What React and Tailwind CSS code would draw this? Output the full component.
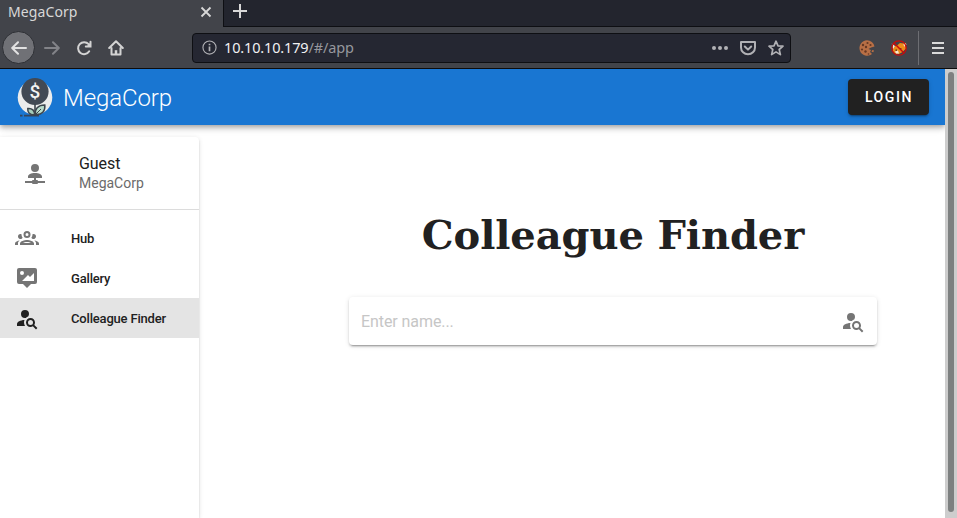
import React from "react";

const ICONS = {
  accountSearch:
    "M15.5,12C18,12 20,14 20,16.5C20,17.38 19.75,18.21 19.31,18.9L22.39,22L21,23.39L17.88,20.32C17.19,20.75 16.37,21 15.5,21C13,21 11,19 11,16.5C11,14 13,12 15.5,12M15.5,14A2.5,2.5 0 0,0 13,16.5A2.5,2.5 0 0,0 15.5,19A2.5,2.5 0 0,0 18,16.5A2.5,2.5 0 0,0 15.5,14M10,4A4,4 0 0,1 14,8C14,8.91 13.69,9.75 13.18,10.43C12.32,10.75 11.55,11.26 10.91,11.9L10,12A4,4 0 0,1 6,8A4,4 0 0,1 10,4M2,20V18C2,15.88 5.31,14.14 9.5,14C9.18,14.78 9,15.62 9,16.5C9,17.79 9.38,19 10,20H2Z",
  accountNetwork:
    "M13,16V18H14A1,1 0 0,1 15,19H22V21H15A1,1 0 0,1 14,22H10A1,1 0 0,1 9,21H2V19H9A1,1 0 0,1 10,18H11V16H5V14.5C5,12.57 8.13,11 12,11C15.87,11 19,12.57 19,14.5V16H13M12,2A4,4 0 0,1 16,6A4,4 0 0,1 12,10A4,4 0 0,1 8,6A4,4 0 0,1 12,2Z",
  tooltipImage:
    "M4,2H20A2,2 0 0,1 22,4V16A2,2 0 0,1 20,18H16L12,22L8,18H4A2,2 0 0,1 2,16V4A2,2 0 0,1 4,2M19,15V7L15,11L13,9L7,15H19M7,5A2,2 0 0,0 5,7A2,2 0 0,0 7,9A2,2 0 0,0 9,7A2,2 0 0,0 7,5Z",
  accountGroup:
    "M12,5A3.5,3.5 0 0,0 8.5,8.5A3.5,3.5 0 0,0 12,12A3.5,3.5 0 0,0 15.5,8.5A3.5,3.5 0 0,0 12,5M12,7A1.5,1.5 0 0,1 13.5,8.5A1.5,1.5 0 0,1 12,10A1.5,1.5 0 0,1 10.5,8.5A1.5,1.5 0 0,1 12,7M5.5,8A2.5,2.5 0 0,0 3,10.5C3,11.44 3.53,12.25 4.29,12.68C4.65,12.88 5.06,13 5.5,13C5.94,13 6.35,12.88 6.71,12.68C7.08,12.47 7.39,12.17 7.62,11.81C6.89,10.86 6.5,9.7 6.5,8.5C6.5,8.41 6.5,8.31 6.5,8.22C6.2,8.08 5.86,8 5.5,8M18.5,8C18.14,8 17.8,8.08 17.5,8.22C17.5,8.31 17.5,8.41 17.5,8.5C17.5,9.7 17.11,10.86 16.38,11.81C16.5,12 16.63,12.15 16.78,12.3C16.94,12.45 17.1,12.58 17.29,12.68C17.65,12.88 18.06,13 18.5,13C18.94,13 19.35,12.88 19.71,12.68C20.47,12.25 21,11.44 21,10.5A2.5,2.5 0 0,0 18.5,8M12,14C9.66,14 5,15.17 5,17.5V19H19V17.5C19,15.17 14.34,14 12,14M4.71,14.55C2.78,14.78 0,15.76 0,17.5V19H3V17.07C3,16.06 3.69,15.22 4.71,14.55M19.29,14.55C20.31,15.22 21,16.06 21,17.07V19H24V17.5C24,15.76 21.22,14.78 19.29,14.55M12,16C13.53,16 15.24,16.5 16.23,17H7.77C8.76,16.5 10.47,16 12,16Z",
};

function Icon({ name, className }) {
  return (
    <svg viewBox="0 0 24 24" className={`size-6 shrink-0 fill-current ${className}`}>
      <path d={ICONS[name]} />
    </svg>
  );
}

// 16px toolbar glyph drawn with strokes
function Glyph({ className = "", children }) {
  return (
    <svg
      viewBox="0 0 16 16"
      className={`size-4 shrink-0 fill-none stroke-current stroke-2 ${className}`}
      strokeLinecap="round"
      strokeLinejoin="round"
    >
      {children}
    </svg>
  );
}

function TabStrip() {
  return (
    <div className="flex h-[27px] bg-[#23252e] text-[#d8d8d8]">
      <div className="flex h-7 w-[223px] items-center justify-between bg-[#42444a] pr-[11px] pb-1 pl-2">
        <span className="text-[14px] leading-5 tracking-[0.1px]">MegaCorp</span>
        <svg viewBox="0 0 12 12" className="size-3 fill-none stroke-current stroke-[1.8]">
          <path d="M1.5 1.5l9 9M10.5 1.5l-9 9" />
        </svg>
      </div>
      <div className="flex flex-1 border-b border-l border-[#0e0f13] pt-[3px] pl-2">
        <svg viewBox="0 0 16 16" className="size-4 fill-none stroke-current stroke-2">
          <path d="M8 1v14M1 8h14" />
        </svg>
      </div>
    </div>
  );
}

function Toolbar() {
  return (
    <div className="flex h-[42px] items-center border-b border-[#0c0c0d] bg-[#42444a] text-[#d3d3d3]">
      <div className="ml-[2px] flex size-[33px] shrink-0 items-center justify-center rounded-full border border-[#2d2f34] bg-[#707176] text-[#e2e2e2]">
        <Glyph>
          <path d="M15 8H1.5M7 2.2L1.2 8L7 13.8" />
        </Glyph>
      </div>
      <Glyph className="ml-[9px] text-[#828388]">
        <path d="M1 8h13.500M9 2.200L14.800 8L9 13.800" />
      </Glyph>
      <Glyph className="ml-4">
        <path d="M13.200 11.300A6 6 0 1 1 12.600 4.200" />
        <path d="M14.500 1.800V6.500H9.800" strokeLinejoin="miter" />
        <path d="M14.500 2.500V6.500H10.500z" className="fill-current stroke-none" />
      </Glyph>
      <Glyph className="ml-4">
        <path d="M1.200 8L8 1.300L14.800 8M3.500 8V14.600H12.500V8" />
        <path d="M8 14V10.200" className="stroke-[2.5]" strokeLinecap="butt" />
      </Glyph>
      <div className="ml-[68px] flex h-[30px] w-[599px] items-center rounded-[4px] border border-[#0e0f13] bg-[#252732] pr-1.5 pl-[9px] text-[#b1b1b5]">
        <svg viewBox="0 0 16 16" className="size-[15px] fill-none stroke-current stroke-[1.2]">
          <circle cx="8" cy="8" r="7" />
          <path d="M8 7v5M8 4v1.600" className="stroke-[1.800]" />
        </svg>
        <span className="mt-px ml-[7px] flex-1 text-[14.500px] tracking-[-0.15px] text-[#96979d]">
          <span className="text-[#f1f1f3]">10.10.10.179</span>/#/app
        </span>
        <svg viewBox="0 0 16 16" className="size-4 fill-current">
          <circle cx="2" cy="8" r="2" />
          <circle cx="8" cy="8" r="2" />
          <circle cx="14" cy="8" r="2" />
        </svg>
        <Glyph className="ml-3">
          <path d="M1 2H15V7.500A7 6.800 0 0 1 1 7.500z" />
          <path d="M4.800 6.500L8 9.600L11.200 6.500" />
        </Glyph>
        <Glyph className="ml-3 stroke-[1.7]">
          <path d="M8 1.200L10 5.800L15 6.200L11.200 9.500L12.400 14.600L8 11.900L3.600 14.600L4.800 9.500L1 6.200L6 5.800z" />
        </Glyph>
      </div>
      <svg viewBox="0 0 16 16" className="ml-[68px] size-4 shrink-0">
        <path
          d="M8 .3A7.700 7.700 0 1 0 13 14L11 12L12 10L9.500 9L12 7.500L15.500 6.500A7.700 7.700 0 0 0 8 .3z"
          fill="#b86f45"
        />
        <path d="M15 10.500L13.300 10L12.500 11.800L14.300 12.300z" fill="#b86f45" />
        <g fill="#663824">
          <circle cx="4" cy="5" r="1.200" />
          <circle cx="8.500" cy="3" r="1.100" />
          <circle cx="7" cy="7" r="1.200" />
          <circle cx="3" cy="9.500" r="1.100" />
          <circle cx="6.500" cy="11.500" r="1.200" />
          <circle cx="11.500" cy="5" r="1.100" />
          <circle cx="9.500" cy="14" r=".8" />
        </g>
      </svg>
      <svg viewBox="0 0 16 16" className="ml-4 size-4 shrink-0">
        <path d="M2 7L6 5.500L9 3L13 3.500L15 3L15 8.500L11.500 12L8 14L4 13.500L2 11z" fill="#ed8b19" />
        <path d="M.8 3.500L4 6L2 9zM13 3L15.500 4L14 7L12.500 5zM4 11.500L7 10.500L8 13.500H5z" fill="#f5e9d8" />
        <path d="M4.500 10.200H6M9 8.800H10.500" stroke="#432d20" strokeWidth="1.200" />
        <circle cx="8" cy="8" r="7.200" fill="none" stroke="#c90b0b" strokeWidth="1.300" />
        <path d="M3 3L13 13" stroke="#c90b0b" strokeWidth="1.400" />
      </svg>
      <div className="ml-[11px] h-[34px] w-px bg-[#6d6e73]" />
      <div className="ml-[13px] flex w-3 flex-col gap-[3px]">
        <div className="h-0.5 bg-[#dadada]" />
        <div className="h-0.5 bg-[#dadada]" />
        <div className="h-0.5 bg-[#dadada]" />
      </div>
    </div>
  );
}

function Logo() {
  return (
    <svg viewBox="0 0 40 40" className="size-10">
      <circle cx="20" cy="20.500" r="17.300" fill="#ececec" />
      <path d="M5 38.700h2.500M9 38.700h15" stroke="#35445a" strokeWidth="1.800" />
      <circle cx="20" cy="14.500" r="13.600" fill="#424954" />
      <path d="M20 27V38" stroke="#3d454d" strokeWidth="1.600" />
      <path d="M20.500 37.500C19.500 32 23 28 29.800 28C30.500 34 27 38 20.500 37.500z" fill="#b9dccb" stroke="#3d454d" strokeWidth="1.500" />
      <path d="M19.500 38C14 38 12.500 35 12.800 31.500C17 31 20 33.500 19.500 38z" fill="#a5cdbb" stroke="#3d454d" strokeWidth="1.500" />
      <path d="M21 37L26 32" stroke="#3d454d" strokeWidth="1" />
      <text
        x="20"
        y="21"
        textAnchor="middle"
        fill="#f3f3f3"
        className="font-['Roboto'] text-[19px] font-medium"
      >
        $
      </text>
    </svg>
  );
}

function NavItem({ icon, label, active }) {
  return (
    <div className={`flex h-10 items-center pl-[15px] ${active ? "bg-[#e4e4e4] text-[#212121]" : "text-[#757575]"}`}>
      <Icon name={icon} className="" />
      <span className="mt-0.5 ml-8 text-[13px] font-medium tracking-[-0.18px] text-[#212121]">{label}</span>
    </div>
  );
}

function Sidebar() {
  return (
    <aside className="mt-3 w-[199px] shrink-0 rounded-tr-[4px] bg-white shadow-[0_3px_1px_-2px_rgba(0,0,0,0.2),0_2px_2px_0_rgba(0,0,0,0.14),0_1px_5px_0_rgba(0,0,0,0.12)]">
      <div className="flex h-[73px] items-center border-b border-[#dcdcdc] pl-[23px]">
        <Icon name="accountNetwork" className="mt-0.5 text-[#757575]" />
        <div className="ml-8">
          <div className="pt-px text-[16px] leading-5 tracking-[-0.05px] text-[#212121]">Guest</div>
          <div className="text-[14px] leading-[19px] text-[#6b6b6b]">MegaCorp</div>
        </div>
      </div>
      <nav className="pt-2">
        <NavItem icon="accountGroup" label="Hub" />
        <NavItem icon="tooltipImage" label="Gallery" />
        <NavItem icon="accountSearch" label="Colleague Finder" active />
      </nav>
    </aside>
  );
}

export default function App() {
  return (
    <div className="flex h-[518px] w-[957px] flex-col overflow-hidden bg-white font-['Noto_Sans',sans-serif]">
      <TabStrip />
      <Toolbar />
      <div className="flex min-h-0 flex-1 font-['Roboto',sans-serif]">
        <div className="flex w-[945px] flex-col overflow-hidden">
          <header className="z-10 flex h-14 shrink-0 items-center bg-[#1976d2] pr-4 pl-[15px] shadow-[0_2px_4px_-1px_rgba(0,0,0,0.2),0_4px_5px_0_rgba(0,0,0,0.14),0_1px_10px_0_rgba(0,0,0,0.12)]">
            <Logo />
            <span className="mt-0.5 ml-2 flex-1 text-[24px] font-light tracking-[-0.1px] text-white">MegaCorp</span>
            <button className="h-9 w-[81px] rounded-[4px] bg-[#212121] pl-px text-[14px] font-medium tracking-[1.6px] text-white shadow-[0_3px_1px_-2px_rgba(0,0,0,0.2),0_2px_2px_0_rgba(0,0,0,0.14),0_1px_5px_0_rgba(0,0,0,0.12)]">
              LOGIN
            </button>
          </header>
          <div className="flex min-h-0 flex-1">
            <Sidebar />
            <main className="flex flex-1 flex-col pt-[86px] pl-[150px]">
              <h1 className="w-[528px] text-center font-['DejaVu_Serif',serif] text-[40px] leading-[48px] font-bold tracking-[-0.1px] text-[#212121]">
                Colleague Finder
              </h1>
              <div className="mt-[38px] flex h-12 w-[528px] items-center rounded-[4px] bg-white pr-3 pl-3 shadow-[0_3px_1px_-2px_rgba(0,0,0,0.2),0_2px_2px_0_rgba(0,0,0,0.14),0_1px_5px_0_rgba(0,0,0,0.12)]">
                <span className="mt-0.5 flex-1 text-[16px] tracking-[-0.08px] text-[#c6c6c6]">Enter name...</span>
                <Icon name="accountSearch" className="text-[#757575]" />
              </div>
            </main>
          </div>
        </div>
        <div className="flex w-3 justify-center bg-[#cdcdcd] pt-[3px] pb-[6px]">
          <div className="w-1.5 rounded-full bg-[#7d8080]" />
        </div>
      </div>
    </div>
  );
}
